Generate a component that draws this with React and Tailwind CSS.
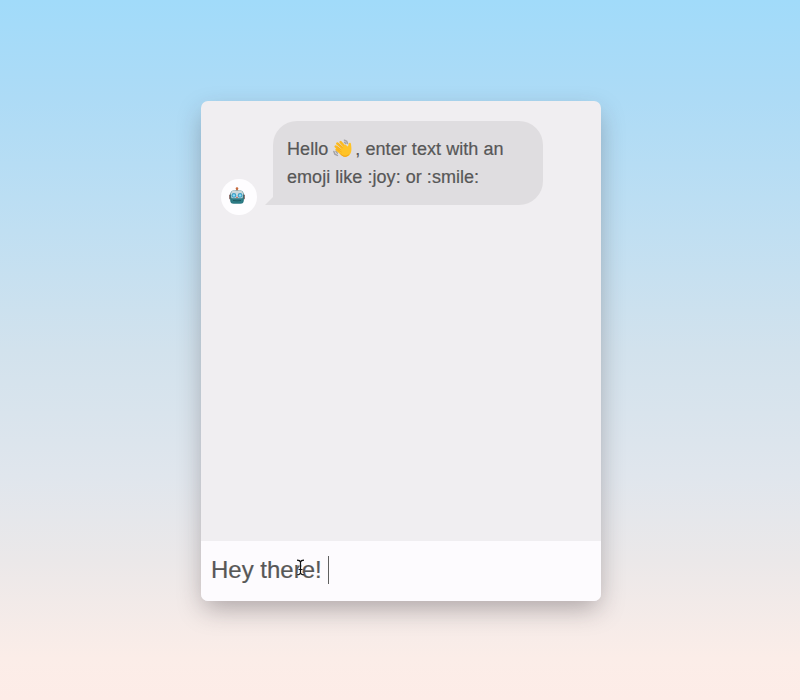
function WavingHand() {
  return (
    <svg viewBox="0 0 20 20" className="ml-[5px] mr-[2px] inline-block h-5 w-5 align-[-4px]" aria-label="waving hand">
      <g fill="none" stroke="#a3a3a7" strokeWidth="1.5" strokeLinecap="round">
        <path d="M11.4 1.2l2.3 1.2.8 2" />
        <path d="M11.5 3.2l1.3 1.3" />
        <path d="M.9 12.5l1 2.6 2.5 1.3" />
        <path d="M3 12.4l1.3 1.7" />
      </g>
      <path
        d="M8.2 14.4L3.6 10.6M9.4 12.5L2.7 7.5M11 10.4L4.3 4.5M13 9L7.6 3.1"
        fill="none"
        stroke="#fcba20"
        strokeWidth="2.5"
        strokeLinecap="round"
      />
      <path
        d="M6.4 10.7l6-5.3 2.2 2.2c.9-.5.8-1.9 1-3 .3-1.3 2.3-1.1 2.4.3.1 1.9.6 3.3.4 5.9-.2 4-2.4 7.1-6 7.1-2.5 0-4.6-2-6-4z"
        fill="#ffc326"
      />
      <path d="M8 10.8L4.3 7.8M9.8 9L6 5.4M8.4 13L4.7 10.5" stroke="#f19a15" strokeWidth=".45" strokeLinecap="round" />
      <path d="M7.5 14.8c2.7 3 5.6 3.2 8 .9" fill="none" stroke="#ee9816" strokeWidth=".9" />
    </svg>
  );
}

function Robot() {
  return (
    <svg viewBox="0 0 16 17" className="mr-[5px] mb-[4px] h-[17px] w-4" aria-label="robot">
      <circle cx="8" cy="1.6" r="1.3" fill="#c96a3c" />
      <path d="M7.2 2.2h1.6l.9 2H6.3z" fill="#b06a45" />
      <rect x="0.2" y="7.4" width="2.2" height="5" rx="0.8" fill="#7a5652" />
      <rect x="13.6" y="7.4" width="2.2" height="5" rx="0.8" fill="#7a5652" />
      <path d="M1.2 8Q1.3 3.4 5 3.4h6q3.7 0 3.8 4.6v5.3q0 3.5-3.4 3.5H4.6q-3.4 0-3.4-3.5z" fill="#2b7882" />
      <path d="M1.8 7Q2.3 3.6 5.2 3.6h5.6q2.9 0 3.4 3.4l-.7 4.2h-11z" fill="#cbd9db" />
      <circle cx="4.9" cy="8.4" r="2.4" fill="#3f9fc5" />
      <circle cx="11.1" cy="8.4" r="2.4" fill="#3f9fc5" />
      <circle cx="4.9" cy="8.4" r="1.2" fill="#8de0fb" />
      <circle cx="11.1" cy="8.4" r="1.2" fill="#8de0fb" />
      <path d="M8 9.3l1 1.8H7z" fill="#c45648" />
      <path d="M2.5 11.7q5.5 1.4 11 0l-.6 3.6H3.1z" fill="#2d7e87" />
      <path d="M4 13.5q4 .8 8 0" fill="none" stroke="#1d5860" strokeWidth="1" />
    </svg>
  );
}

function TextPointer() {
  return (
    <svg viewBox="0 0 9 17" className="absolute top-[18px] left-[95px] h-[17px] w-[9px]" aria-hidden="true">
      <path d="M1 1.2q3 0 3.5 2Q5 1.2 8 1.2M4.5 3v11M1 15.8q3 0 3.5-2q.5 2 3.5 2M2.5 10.5h4" fill="none" stroke="#fff" strokeWidth="2.4" opacity=".7" />
      <path d="M1 1.2q3 0 3.5 2Q5 1.2 8 1.2M4.5 3v11M1 15.8q3 0 3.5-2q.5 2 3.5 2M2.5 10.5h4" fill="none" stroke="#111" strokeWidth="1.2" />
    </svg>
  );
}

export default function App() {
  return (
    <main className="flex h-[700px] w-[800px] items-start bg-[linear-gradient(to_bottom,#a1dbfa_0%,#addbf6_14%,#c0dff2_33%,#d2e2ed_50%,#e0e6ed_68%,#ebe8e9_80%,#fbede8_94%,#fdece7_100%)] pt-[101px] pl-[201px] font-['Liberation_Sans',Arial,sans-serif] text-[#575757]">
      <section className="flex h-[500px] w-[400px] flex-col overflow-hidden rounded-[7px] bg-[#f0eef1] shadow-[0_10px_26px_-3px_rgba(50,40,45,0.36)]">
        <div className="flex flex-1 items-start px-5 pt-5">
          <div className="mt-[58px] flex h-9 w-9 shrink-0 items-center justify-center rounded-full bg-[#fefdff]">
            <Robot />
          </div>
          <div className="relative ml-4 h-[84px] w-[270px] rounded-[24px] rounded-bl-none bg-[#dfdde0] px-[14px] pt-[14px] text-[18px] leading-7 [-webkit-text-stroke:0.2px_#575757]">
            <svg viewBox="0 0 8 8" className="absolute bottom-0 -left-2 h-2 w-2" aria-hidden="true">
              <path d="M8 0v8H0z" fill="#dfdde0" />
            </svg>
            <p className="h-7 whitespace-nowrap tracking-[0.06px]">Hello<WavingHand />, enter text with an</p>
            <p className="h-7 whitespace-nowrap tracking-[0.04px]">emoji like :joy: or :smile:</p>
          </div>
        </div>
        <div className="relative flex h-[60px] items-center bg-[#fdfbfe] px-[10px] pb-[2px] text-[24px] [-webkit-text-stroke:0.2px_#575757]">
          <span>Hey there!</span>
          <span className="ml-[6px] h-7 w-px bg-[#606060]" />
          <TextPointer />
        </div>
      </section>
    </main>
  );
}
